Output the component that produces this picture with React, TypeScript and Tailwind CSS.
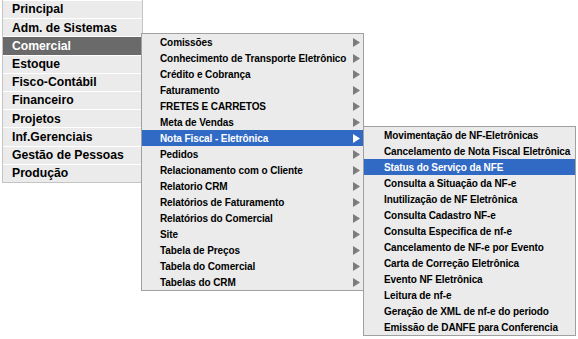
import React from "react";

const mainItems = [
  "Principal",
  "Adm. de Sistemas",
  "Comercial",
  "Estoque",
  "Fisco-Contábil",
  "Financeiro",
  "Projetos",
  "Inf.Gerenciais",
  "Gestão de Pessoas",
  "Produção",
];

const sub1 = [
  "Comissões",
  "Conhecimento de Transporte Eletrônico",
  "Crédito e Cobrança",
  "Faturamento",
  "FRETES E CARRETOS",
  "Meta de Vendas",
  "Nota Fiscal - Eletrônica",
  "Pedidos",
  "Relacionamento com o Cliente",
  "Relatorio CRM",
  "Relatórios de Faturamento",
  "Relatórios do Comercial",
  "Site",
  "Tabela de Preços",
  "Tabela do Comercial",
  "Tabelas do CRM",
];

const sub2 = [
  "Movimentação de NF-Eletrônicas",
  "Cancelamento de Nota Fiscal Eletrônica",
  "Status do Serviço da NFE",
  "Consulta a Situação da NF-e",
  "Inutilização de NF Eletrônica",
  "Consulta Cadastro NF-e",
  "Consulta Especifica de nf-e",
  "Cancelamento de NF-e por Evento",
  "Carta de Correção Eletrônica",
  "Evento NF Eletrônica",
  "Leitura de nf-e",
  "Geração de XML de nf-e do periodo",
  "Emissão de DANFE para Conferencia",
];

function Arrow({ white }: { white?: boolean }) {
  return (
    <svg width="7" height="9" viewBox="0 0 7 9" className="shrink-0">
      <polygon points="0,0 7,4.5 0,9" fill={white ? "#ffffff" : "#7c7c7c"} />
    </svg>
  );
}

export default function App() {
  return (
    <div
      className="relative w-[578px] h-[339px] bg-white overflow-hidden"
      style={{ fontFamily: '"Liberation Sans", Arial, sans-serif' }}
    >
      {/* Main menu */}
      <div className="ml-[2px] w-[141px] border-l border-r border-b border-[#c4c4c4] bg-white">
        {mainItems.map((t, i) => (
          <div
            key={t}
            className={
              "h-[18.2px] border-t border-white flex items-center pl-[9px] text-[12.2px] font-bold leading-none " +
              (i === 2 ? "bg-[#6a6a6a] text-white" : "bg-[#ebebeb] text-black")
            }
          >
            {t}
          </div>
        ))}
      </div>

      {/* Submenu 1 */}
      <div className="absolute left-[141px] top-[33px] w-[223px] border border-[#a0a0a0] bg-[#ebebeb]">
        {sub1.map((t, i) => {
          const active = i === 6;
          return (
            <div
              key={t}
              className={
                "h-[16px] flex items-center justify-between pl-[18px] pr-[3px] pt-px text-[10px] font-bold leading-none tracking-[-0.1px] " +
                (active ? "bg-[#316ac5] text-white" : "text-black")
              }
            >
              <span>{t}</span>
              <Arrow white={active} />
            </div>
          );
        })}
      </div>

      {/* Submenu 2 */}
      <div className="absolute left-[363px] top-[126px] w-[213px] border border-[#a0a0a0] bg-[#ebebeb]">
        {sub2.map((t, i) => {
          const active = i === 2;
          return (
            <div
              key={t}
              className={
                "h-[16px] flex items-center pl-[20px] pt-px text-[10px] font-bold leading-none tracking-[-0.1px] " +
                (active ? "bg-[#316ac5] text-white" : "text-black")
              }
            >
              {t}
            </div>
          );
        })}
      </div>
    </div>
  );
}
